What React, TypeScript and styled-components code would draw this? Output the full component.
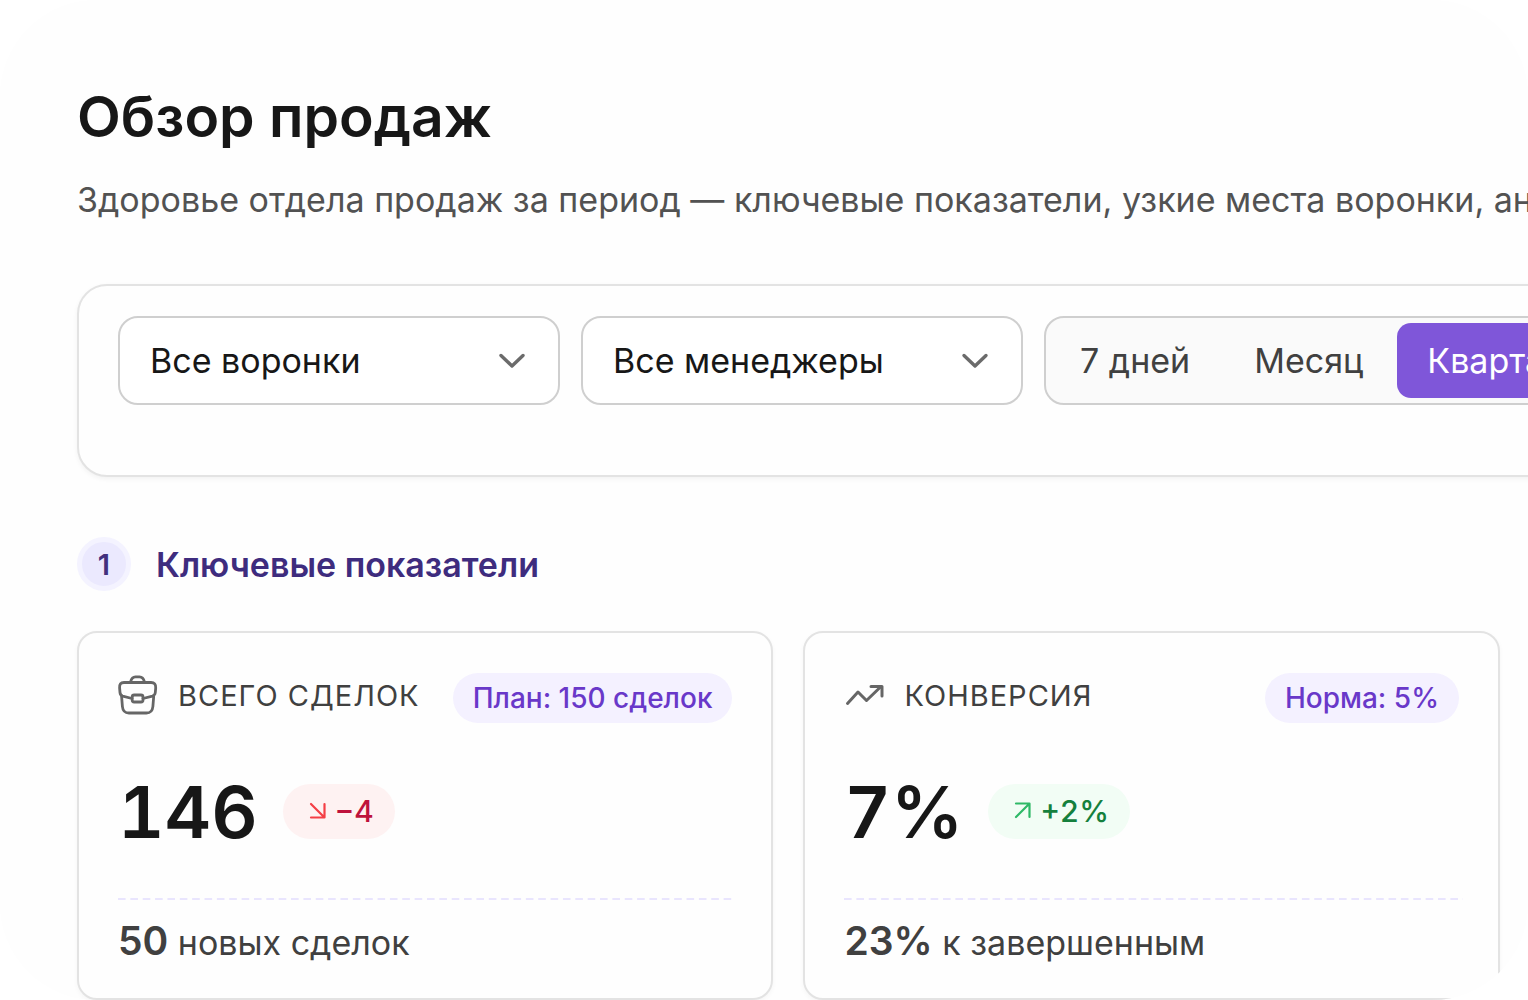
import React from "react";
import styled, { createGlobalStyle } from "styled-components";

const GlobalStyle = createGlobalStyle`
  *, *::before, *::after { box-sizing: border-box; }
  body {
    margin: 0;
    background: #ffffff;
    color: #171717;
    font-family: Inter, "Noto Sans", "Liberation Sans", sans-serif;
    font-optical-sizing: none;
    overflow: hidden;
  }
  h1, h2, h3, p { margin: 0; }
`;

const Frame = styled.main`
  min-height: 100vh;
  overflow: hidden;
  padding: 80px 0 0 77px;
  border-radius: 96px;
  background: #fefefe;
`;

const Title = styled.h1`
  font-size: 57px;
  line-height: 74px;
  font-weight: 600;
`;

const Subtitle = styled.p`
  margin-top: 22px;
  font-size: 34px;
  line-height: 48px;
  color: #525252;
  white-space: nowrap;
`;

const Filters = styled.form`
  display: flex;
  align-items: flex-start;
  gap: 21px;
  width: 110%;
  margin-top: 60px;
  padding: 30px 39px 70px;
  border: 2px solid #e3e3e3;
  border-radius: 30px;
  background: #fefefe;
  box-shadow: 0 2px 5px rgba(0, 0, 0, 0.05);
`;

const SelectBox = styled.label`
  display: grid;
  flex: none;
  width: 442px;
  align-items: center;

  & > * { grid-area: 1 / 1; }

  svg {
    justify-self: end;
    margin-right: 34px;
    pointer-events: none;
  }
`;

const Select = styled.select`
  appearance: none;
  width: 100%;
  height: 89px;
  padding: 0 80px 0 30px;
  border: 2px solid #cfcfcf;
  border-radius: 20px;
  background: #ffffff;
  color: #171717;
  font: inherit;
  font-size: 34px;
`;

const Segmented = styled.div`
  display: flex;
  flex: none;
  gap: 4px;
  height: 89px;
  padding: 5px 4px;
  border: 2px solid #cfcfcf;
  border-radius: 20px;
  background: #fafafa;
`;

const Segment = styled.button<{ $active?: boolean }>`
  padding: 0 30px;
  border: 0;
  border-radius: 14px;
  background: ${(p) => (p.$active ? "#7f56d9" : "transparent")};
  color: ${(p) => (p.$active ? "#ffffff" : "#404040")};
  font: inherit;
  font-size: 34px;
  white-space: nowrap;
`;

const SectionHead = styled.div`
  display: flex;
  align-items: center;
  gap: 25px;
  margin-top: 60px;
`;

const Step = styled.span`
  display: grid;
  place-items: center;
  width: 54px;
  height: 54px;
  border: 5px solid #f4f3ff;
  border-radius: 50%;
  background: #ebe9fe;
  color: #42307d;
  font-size: 29px;
  font-weight: 600;
`;

const SectionTitle = styled.h2`
  padding-top: 2px;
  font-size: 34px;
  line-height: 48px;
  font-weight: 600;
  color: #3e2c7e;
`;

const Cards = styled.section`
  display: grid;
  grid-auto-flow: column;
  grid-auto-columns: 48%;
  gap: 30px;
  margin-top: 40px;
`;

const Card = styled.article`
  padding: 40px 39px 31px;
  border: 2px solid #e3e3e3;
  border-radius: 20px;
  background: #fefefe;
  box-shadow: 0 2px 5px rgba(0, 0, 0, 0.04);
`;

const CardHead = styled.header`
  display: flex;
  align-items: flex-start;
`;

const CardName = styled.div`
  display: flex;
  flex: 1;
  align-items: center;
  gap: 20px;
  height: 44px;
`;

const Label = styled.h3`
  font-size: 29px;
  font-weight: 400;
  color: #404040;
  text-transform: uppercase;
  letter-spacing: 1px;
  white-space: nowrap;
`;

const Target = styled.span`
  padding: 0 20px;
  border-radius: 25px;
  background: #f4f1ff;
  color: #6938c9;
  font-size: 28px;
  line-height: 50px;
  font-weight: 500;
  white-space: nowrap;
`;

const ValueRow = styled.div`
  display: flex;
  align-items: center;
  gap: 25px;
  margin-top: 44px;
`;

const Value = styled.strong`
  padding-top: 2px;
  font-size: 72px;
  line-height: 86px;
  font-weight: 600;
  font-variant-numeric: tabular-nums;
`;

const Delta = styled.span<{ $up?: boolean }>`
  display: flex;
  align-items: center;
  gap: 8px;
  height: 55px;
  padding: 0 21px 0 24px;
  border-radius: 28px;
  background: ${(p) => (p.$up ? "#f2fdf5" : "#fef2f2")};
  color: ${(p) => (p.$up ? "#15803d" : "#be123c")};
  font-size: 30px;
  font-weight: 500;
  font-variant-numeric: tabular-nums;

  svg { color: ${(p) => (p.$up ? "#2fb967" : "#f43f46")}; }
`;

const Rule = styled.div`
  height: 2px;
  margin: 43px -4px 0 0;
  background: linear-gradient(90deg, #e9e5fe 8px, transparent 8px) 0 0 / 2% 2px repeat-x;
`;

const Note = styled.p`
  margin-top: 17px;
  font-size: 34px;
  line-height: 48px;
  color: #404040;
  white-space: nowrap;

  b { font-size: 39px; font-weight: 600; }
`;

const Chevron = () => (
  <svg width="28" height="18" viewBox="0 0 28 18" fill="none" stroke="#6b6b6b" strokeWidth="3.4" strokeLinecap="round" strokeLinejoin="round" aria-hidden="true">
    <path d="M3 3.500 14 14 25 3.500" />
  </svg>
);

const Briefcase = () => (
  <svg width="40" height="40" viewBox="0 0 40 40" fill="none" stroke="#666666" strokeWidth="2.800" strokeLinecap="round" strokeLinejoin="round" aria-hidden="true">
    <path d="M12.500 7C13.500 3 15 1.900 17.500 1.900h4c2.500 0 4 1.100 5 5.100" />
    <path d="M6 7.500h27c3.500 0 4.900 2 4.700 5.300l-.4 4.700c-.2 2-1 3-2.900 3.600L25 23.500M14 23.500l-9.300-2.400c-1.900-.6-2.500-1.600-2.700-3.600l-.4-4.700C1.400 9.500 2.500 7.500 6 7.500" />
    <path d="M3.600 21.500l.8 10c.4 4.500 2.300 6.500 6.500 6.500h17.500c4.200 0 6.100-2 6.500-6.500l.8-10" />
    <rect x="14.200" y="20" width="10.800" height="7" rx="2" />
  </svg>
);

const Trend = () => (
  <svg width="40" height="40" viewBox="0 0 40 40" fill="none" stroke="#666666" strokeWidth="3" strokeLinecap="round" strokeLinejoin="round" aria-hidden="true">
    <path d="M3.500 28.500 14 17l8.500 8.500L36.500 12" />
    <path d="M27 11.500H38V21" />
  </svg>
);

const Arrow = ({ up }: { up?: boolean }) => (
  <svg width="20" height="20" viewBox="0 0 20 20" fill="none" stroke="currentColor" strokeWidth="2.200" strokeLinecap="round" strokeLinejoin="round" aria-hidden="true">
    <path d={up ? "M4 16 17 3M4 2.500H17.500V16" : "M4 3 17 16M4 16.500H17.500V3"} />
  </svg>
);

interface Metric {
  icon: React.ReactNode;
  label: string;
  target: string;
  value: string;
  delta: string;
  up?: boolean;
  strong: string;
  note: string;
}

const metrics: Metric[] = [
  { icon: <Briefcase />, label: "Всего сделок", target: "План: 150 сделок", value: "146", delta: "−4", strong: "50", note: "новых сделок" },
  { icon: <Trend />, label: "Конверсия", target: "Норма: 5%", value: "7%", delta: "+2%", up: true, strong: "23%", note: "к завершенным" },
];

export default function App() {
  return (
    <>
      <GlobalStyle />
      <Frame>
        <Title>Обзор продаж</Title>
        <Subtitle>Здоровье отдела продаж за период — ключевые показатели, узкие места воронки, аномалии</Subtitle>
        <Filters>
          <SelectBox>
            <Select aria-label="Воронка"><option>Все воронки</option></Select>
            <Chevron />
          </SelectBox>
          <SelectBox>
            <Select aria-label="Менеджер"><option>Все менеджеры</option></Select>
            <Chevron />
          </SelectBox>
          <Segmented>
            <Segment type="button">7 дней</Segment>
            <Segment type="button">Месяц</Segment>
            <Segment type="button" $active>Квартал</Segment>
          </Segmented>
        </Filters>
        <SectionHead>
          <Step>1</Step>
          <SectionTitle>Ключевые показатели</SectionTitle>
        </SectionHead>
        <Cards>
          {metrics.map((m) => (
            <Card key={m.label}>
              <CardHead>
                <CardName>
                  {m.icon}
                  <Label>{m.label}</Label>
                </CardName>
                <Target>{m.target}</Target>
              </CardHead>
              <ValueRow>
                <Value>{m.value}</Value>
                <Delta $up={m.up}>
                  <Arrow up={m.up} />
                  {m.delta}
                </Delta>
              </ValueRow>
              <Rule />
              <Note><b>{m.strong}</b> {m.note}</Note>
            </Card>
          ))}
        </Cards>
      </Frame>
    </>
  );
}
